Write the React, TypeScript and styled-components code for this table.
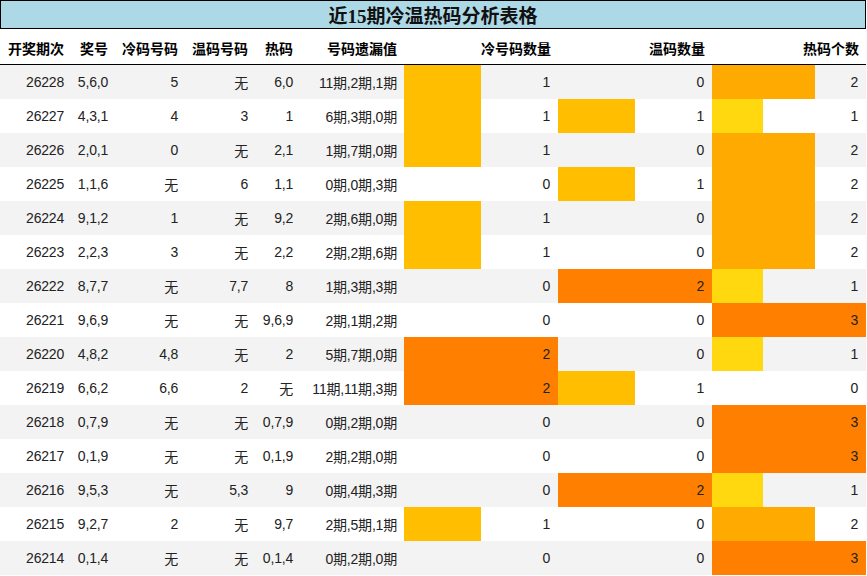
import React from "react";
import styled, { createGlobalStyle } from "styled-components";

const GlobalStyle = createGlobalStyle`
  html, body {
    margin: 0;
    padding: 0;
    background: #ffffff;
  }
  body {
    font-family: "Liberation Sans", "Noto Sans CJK SC", sans-serif;
  }
`;

const COLS = "71px 44px 70px 70px 45px 104px 154px 154px 154px";

const Page = styled.div`
  width: 866px;
  display: flex;
  flex-direction: column;
`;

const TitleBar = styled.div`
  height: 27px;
  border: 1px solid #000;
  background: #add8e6;
  display: flex;
  align-items: center;
  justify-content: center;
  font-family: "Liberation Serif", "Noto Sans CJK SC", serif;
  font-weight: bold;
  font-size: 19px;
  color: #111;
`;

const HeaderRow = styled.div`
  display: grid;
  grid-template-columns: ${COLS};
  height: 35px;
  border-bottom: 1px solid #000;
`;

const HeadCell = styled.div`
  display: flex;
  align-items: center;
  justify-content: flex-end;
  padding-right: 7px;
  padding-top: 2px;
  font-weight: bold;
  font-size: 14px;
  color: #000;
  font-family: "Noto Sans CJK SC", "Liberation Sans", sans-serif;
  white-space: nowrap;
`;

const Row = styled.div<{ $alt: boolean }>`
  display: grid;
  grid-template-columns: ${COLS};
  height: 34px;
  background: ${(p) => (p.$alt ? "#f3f3f3" : "#ffffff")};
`;

const Cell = styled.div`
  display: flex;
  align-items: center;
  justify-content: flex-end;
  padding-right: 7px;
  font-size: 14px;
  color: #222;
  white-space: nowrap;
  letter-spacing: -0.2px;
`;

const BarCell = styled(Cell)<{ $pct: number; $color: string }>`
  padding-right: 8px;
  background: ${(p) =>
    p.$pct > 0
      ? `linear-gradient(to right, ${p.$color} 0, ${p.$color} ${p.$pct}%, transparent ${p.$pct}%)`
      : "transparent"};
`;

type RowData = [string, string, string, string, string, string, number, number, number];

const rows: RowData[] = [
  ["26228", "5,6,0", "5", "无", "6,0", "11期,2期,1期", 1, 0, 2],
  ["26227", "4,3,1", "4", "3", "1", "6期,3期,0期", 1, 1, 1],
  ["26226", "2,0,1", "0", "无", "2,1", "1期,7期,0期", 1, 0, 2],
  ["26225", "1,1,6", "无", "6", "1,1", "0期,0期,3期", 0, 1, 2],
  ["26224", "9,1,2", "1", "无", "9,2", "2期,6期,0期", 1, 0, 2],
  ["26223", "2,2,3", "3", "无", "2,2", "2期,2期,6期", 1, 0, 2],
  ["26222", "8,7,7", "无", "7,7", "8", "1期,3期,3期", 0, 2, 1],
  ["26221", "9,6,9", "无", "无", "9,6,9", "2期,1期,2期", 0, 0, 3],
  ["26220", "4,8,2", "4,8", "无", "2", "5期,7期,0期", 2, 0, 1],
  ["26219", "6,6,2", "6,6", "2", "无", "11期,11期,3期", 2, 1, 0],
  ["26218", "0,7,9", "无", "无", "0,7,9", "0期,2期,0期", 0, 0, 3],
  ["26217", "0,1,9", "无", "无", "0,1,9", "2期,2期,0期", 0, 0, 3],
  ["26216", "9,5,3", "无", "5,3", "9", "0期,4期,3期", 0, 2, 1],
  ["26215", "9,2,7", "2", "无", "9,7", "2期,5期,1期", 1, 0, 2],
  ["26214", "0,1,4", "无", "无", "0,1,4", "0期,2期,0期", 0, 0, 3],
];

const headers = ["开奖期次", "奖号", "冷码号码", "温码号码", "热码", "号码遗漏值", "冷号码数量", "温码数量", "热码个数"];

const twoScale = (v: number) => (v >= 2 ? "#ff8000" : "#ffbf00");
const hotScale = (v: number) => (v >= 3 ? "#ff8000" : v === 2 ? "#ffaa00" : "#ffd80f");

export default function App() {
  return (
    <>
      <GlobalStyle />
      <Page>
        <TitleBar>近15期冷温热码分析表格</TitleBar>
        <HeaderRow>
          {headers.map((h) => (
            <HeadCell key={h}>{h}</HeadCell>
          ))}
        </HeaderRow>
        {rows.map((r, i) => (
          <Row key={r[0]} $alt={i % 2 === 0}>
            <Cell>{r[0]}</Cell>
            <Cell>{r[1]}</Cell>
            <Cell>{r[2]}</Cell>
            <Cell>{r[3]}</Cell>
            <Cell>{r[4]}</Cell>
            <Cell>{r[5]}</Cell>
            <BarCell $pct={(r[6] / 2) * 100} $color={twoScale(r[6])}>{r[6]}</BarCell>
            <BarCell $pct={(r[7] / 2) * 100} $color={twoScale(r[7])}>{r[7]}</BarCell>
            <BarCell $pct={(r[8] / 3) * 100} $color={hotScale(r[8])}>{r[8]}</BarCell>
          </Row>
        ))}
      </Page>
    </>
  );
}
